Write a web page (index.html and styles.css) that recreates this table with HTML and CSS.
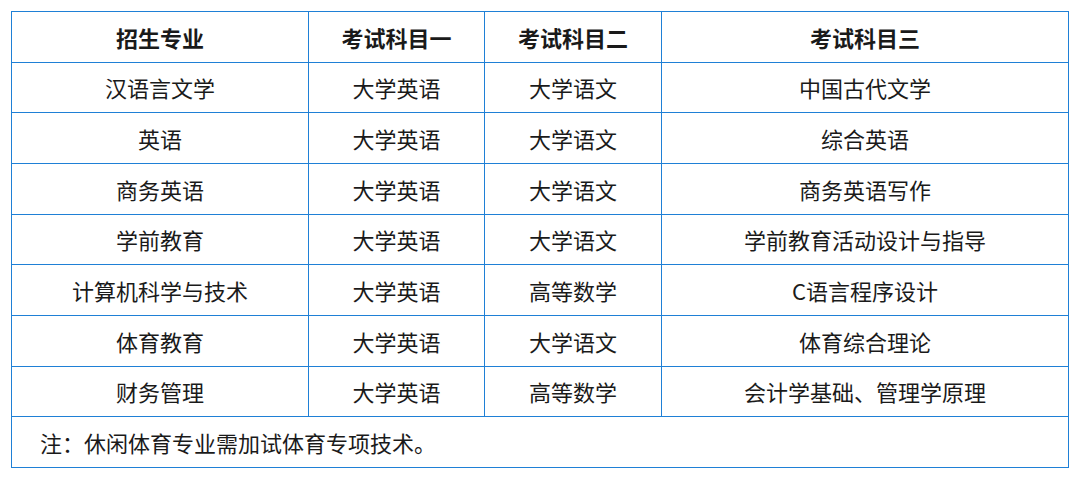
FILE: index.html
```html
<!DOCTYPE html>
<html lang="zh-CN">
<head>
<meta charset="utf-8">
<link rel="stylesheet" href="styles.css">
</head>
<body>
<table class="exam">
  <colgroup>
    <col class="c1"><col class="c2"><col class="c3"><col class="c4">
  </colgroup>
  <thead>
    <tr><th>招生专业</th><th>考试科目一</th><th>考试科目二</th><th>考试科目三</th></tr>
  </thead>
  <tbody>
    <tr><td>汉语言文学</td><td>大学英语</td><td>大学语文</td><td>中国古代文学</td></tr>
    <tr><td>英语</td><td>大学英语</td><td>大学语文</td><td>综合英语</td></tr>
    <tr><td>商务英语</td><td>大学英语</td><td>大学语文</td><td>商务英语写作</td></tr>
    <tr><td>学前教育</td><td>大学英语</td><td>大学语文</td><td>学前教育活动设计与指导</td></tr>
    <tr><td>计算机科学与技术</td><td>大学英语</td><td>高等数学</td><td>C语言程序设计</td></tr>
    <tr><td>体育教育</td><td>大学英语</td><td>大学语文</td><td>体育综合理论</td></tr>
    <tr><td>财务管理</td><td>大学英语</td><td>高等数学</td><td>会计学基础、管理学原理</td></tr>
    <tr><td class="note" colspan="4">注：休闲体育专业需加试体育专项技术。</td></tr>
  </tbody>
</table>
</body>
</html>
```

FILE: styles.css
```css
html, body {
  margin: 0;
  padding: 0;
  background: #ffffff;
}
body {
  padding: 11px 0 0 11px;
  font-family: "Noto Sans CJK SC", "Noto Sans", sans-serif;
  color: #1a1a1a;
}
.exam {
  border-collapse: separate;
  border-spacing: 0;
  table-layout: fixed;
  width: 1058px;
  border-top: 1px solid #1f80d6;
  border-left: 1px solid #1f80d6;
}
.c1 { width: 297px; }
.c2 { width: 176px; }
.c3 { width: 177px; }
.c4 { width: 407px; }
.exam th,
.exam td {
  border-right: 1px solid #1f80d6;
  border-bottom: 1px solid #1f80d6;
  height: 49.67px;
  padding: 0;
  text-align: center;
  vertical-align: middle;
  font-size: 22px;
  line-height: 1;
  font-weight: 400;
}
.exam th {
  font-weight: 700;
}
.exam td.note {
  text-align: left;
  padding-left: 28px;
}
```
